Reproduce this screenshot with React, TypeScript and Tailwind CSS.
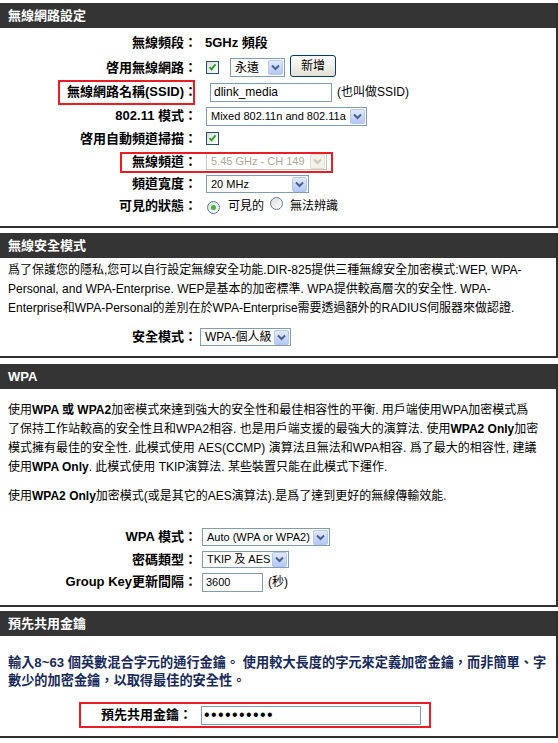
import React from "react";

const Chevron = ({ color = "#4d6185" }: { color?: string }) => (
  <svg width="9" height="7" viewBox="0 0 9 7">
    <path d="M1 1.5l3.5 3.5L8 1.5" stroke={color} strokeWidth="2" fill="none" />
  </svg>
);

function Select({
  value,
  className,
  disabled,
}: {
  value: string;
  className: string;
  disabled?: boolean;
}) {
  return (
    <div
      className={`flex items-center border bg-white pl-[4px] pr-[1px] text-[11px] ${
        disabled ? "border-[#c9c7ba] text-[#aca899]" : "border-[#7f9db9] text-black"
      } ${className}`}
    >
      <span className="whitespace-nowrap">{value}</span>
      <span
        className={`ml-auto w-[15px] h-[15px] rounded-[2px] border flex items-center justify-center ${
          disabled
            ? "border-[#e2dfd3] bg-[#f2f1ea]"
            : "border-[#b6c7ef] bg-linear-to-b from-[#e1eaff] to-[#b4c8f6]"
        }`}
      >
        <Chevron color={disabled ? "#cac7b9" : "#4d6185"} />
      </span>
    </div>
  );
}

const Checkbox = () => (
  <span className="inline-flex w-[13px] h-[13px] border border-[#1c5180] bg-linear-to-br from-[#dcdcd7] to-white items-center justify-center">
    <svg width="9" height="9" viewBox="0 0 9 9">
      <path d="M1.5 4.2l2 2.2 4-5" stroke="#21a121" strokeWidth="1.8" fill="none" />
    </svg>
  </span>
);

const Radio = ({ checked }: { checked?: boolean }) => (
  <span className="inline-flex w-[13px] h-[13px] rounded-full border border-[#5e7a96] bg-linear-to-br from-[#dcdcd7] to-white items-center justify-center">
    {checked && <span className="w-[5px] h-[5px] rounded-full bg-[#3cb63c]" />}
  </span>
);

function Row({
  label,
  h,
  gap = "ml-[8px]",
  children,
}: {
  label: React.ReactNode;
  h: string;
  gap?: string;
  children?: React.ReactNode;
}) {
  return (
    <div className={`flex items-center ${h}`}>
      <div className="w-[197px] text-right font-bold text-[13px] whitespace-nowrap">{label}</div>
      <div className={`${gap} flex items-center text-[12px]`}>{children}</div>
    </div>
  );
}

function Section({
  title,
  mb,
  children,
}: {
  title: string;
  mb: string;
  children: React.ReactNode;
}) {
  return (
    <div className={`border-r-2 border-b-2 border-[#2f2f2f] ${mb}`}>
      <div className="h-[25px] bg-[#343434] text-white font-bold text-[13px] pl-[8px] flex items-center">
        {title}
      </div>
      {children}
    </div>
  );
}

export default function App() {
  return (
    <div className="w-[558px] h-[743px] bg-white pt-[3px] text-black font-['Liberation_Sans','Noto_Sans_CJK_TC',sans-serif]">
      {/* 無線網路設定 */}
      <Section title="無線網路設定" mb="mb-[5px]">
        <div className="relative pt-[3px] pb-[9px]">
          <Row label="無線頻段：" h="h-[24px]">
            <span className="font-bold text-[13px]">5GHz 頻段</span>
          </Row>
          <Row label="啓用無線網路：" h="h-[25px]">
            <span className="ml-px">
              <Checkbox />
            </span>
            <Select value="永遠" className="ml-[11px] w-[55px] h-[19px] text-[12px]" />
            <span className="ml-[5px] mb-[4px] h-[22px] w-[46px] rounded-[3px] border border-[#003c74] bg-linear-to-b from-white to-[#e3e0d2] flex items-center justify-center text-[12px]">
              新增
            </span>
          </Row>
          <Row label="無線網路名稱(SSID)：" h="h-[24px]">
            <span className="ml-[5px] w-[122px] h-[19px] border border-[#7f9db9] pl-[3px] flex items-center text-[12px]">
              dlink_media
            </span>
            <span className="ml-[5px]">(也叫做SSID)</span>
          </Row>
          <Row label="802.11 模式：" h="h-[24px]">
            <Select value="Mixed 802.11n and 802.11a" className="ml-px w-[161px] h-[19px]" />
          </Row>
          <Row label="啓用自動頻道掃描：" h="h-[22px]">
            <span className="ml-px">
              <Checkbox />
            </span>
          </Row>
          <Row label="無線頻道：" h="h-[23px]">
            <Select value="5.45 GHz - CH 149" className="ml-px w-[121px] h-[17px]" disabled />
          </Row>
          <Row label="頻道寬度：" h="h-[22px]">
            <Select value="20 MHz" className="ml-px w-[103px] h-[18px]" />
          </Row>
          <Row label="可見的狀態：" h="h-[22px]">
            <span className="ml-[2px]">
              <Radio checked />
            </span>
            <span className="ml-[8px]">可見的</span>
            <span className="ml-[6px]">
              <Radio />
            </span>
            <span className="ml-[7px]">無法辨識</span>
          </Row>

          {/* annotation boxes */}
          <div className="absolute left-[58px] top-[52px] w-[137px] h-[25px] border-2 border-[#ec1c24]" />
          <div className="absolute left-[120px] top-[124px] w-[213px] h-[21px] border-2 border-[#ec1c24]" />
        </div>
      </Section>

      {/* 無線安全模式 */}
      <Section title="無線安全模式" mb="mb-[6px]">
        <div className="pt-[3px] pb-[8px]">
          <div className="pl-[8px] text-[12px] leading-[19px] whitespace-nowrap">
            <div>爲了保護您的隱私,您可以自行設定無線安全功能.DIR-825提供三種無線安全加密模式:WEP, WPA-</div>
            <div>Personal, and WPA-Enterprise. WEP是基本的加密標準. WPA提供較高層次的安全性. WPA-</div>
            <div>Enterprise和WPA-Personal的差別在於WPA-Enterprise需要透過額外的RADIUS伺服器來做認證.</div>
          </div>
          <div className="mt-[8px]">
            <Row label="安全模式：" h="h-[22px]" gap="ml-[3px]">
              <Select value="WPA-個人級" className="w-[91px] h-[18px] text-[12px]" />
            </Row>
          </div>
        </div>
      </Section>

      {/* WPA */}
      <Section title="WPA" mb="mb-[4px]">
        <div className="pt-[12px] pb-[12px]">
          <div className="pl-[8px] text-[12px] leading-[19px] whitespace-nowrap">
            <div>
              使用<b>WPA 或 WPA2</b>加密模式來達到強大的安全性和最佳相容性的平衡. 用戶端使用WPA加密模式爲
            </div>
            <div>
              了保持工作站較高的安全性且和WPA2相容. 也是用戶端支援的最強大的演算法. 使用<b>WPA2 Only</b>加密
            </div>
            <div>模式擁有最佳的安全性. 此模式使用 AES(CCMP) 演算法且無法和WPA相容. 爲了最大的相容性, 建議</div>
            <div>
              使用<b>WPA Only</b>. 此模式使用 TKIP演算法. 某些裝置只能在此模式下運作.
            </div>
            <div className="mt-[10px]">
              使用<b>WPA2 Only</b>加密模式(或是其它的AES演算法).是爲了達到更好的無線傳輸效能.
            </div>
          </div>
          <div className="mt-[20px]">
            <Row label="WPA 模式：" h="h-[22px]" gap="ml-[5px]">
              <Select value="Auto (WPA or WPA2)" className="w-[128px] h-[18px]" />
            </Row>
            <Row label="密碼類型：" h="h-[23px]" gap="ml-[5px]">
              <Select value="TKIP 及 AES" className="w-[87px] h-[17px]" />
            </Row>
            <Row label="Group Key更新間隔：" h="h-[22px]" gap="ml-[5px]">
              <span className="w-[61px] h-[19px] border border-[#7f9db9] pl-[3px] flex items-center text-[11px]">
                3600
              </span>
              <span className="ml-[5px]">(秒)</span>
            </Row>
          </div>
        </div>
      </Section>

      {/* 預先共用金鑰 */}
      <Section title="預先共用金鑰" mb="mb-0">
        <div className="pt-[18px] pb-[8px]">
          <div className="pl-[8px] text-[13.2px] leading-[18px] font-bold text-[#17295a] whitespace-nowrap">
            <div>輸入8~63 個英數混合字元的通行金鑰。 使用較大長度的字元來定義加密金鑰，而非簡單、字</div>
            <div>數少的加密金鑰，以取得最佳的安全性。</div>
          </div>
          <div className="mt-[12px] ml-[79px] w-[352px] h-[26px] border-2 border-[#ec1c24] flex items-center">
            <div className="w-[111px] text-right font-bold text-[13px] whitespace-nowrap">預先共用金鑰：</div>
            <div className="ml-[9px] w-[220px] h-[19px] border border-[#7f9db9] pl-[2px] flex items-center text-[16px] leading-none tracking-[1.4px]">
              ••••••••••
            </div>
          </div>
        </div>
      </Section>
    </div>
  );
}
